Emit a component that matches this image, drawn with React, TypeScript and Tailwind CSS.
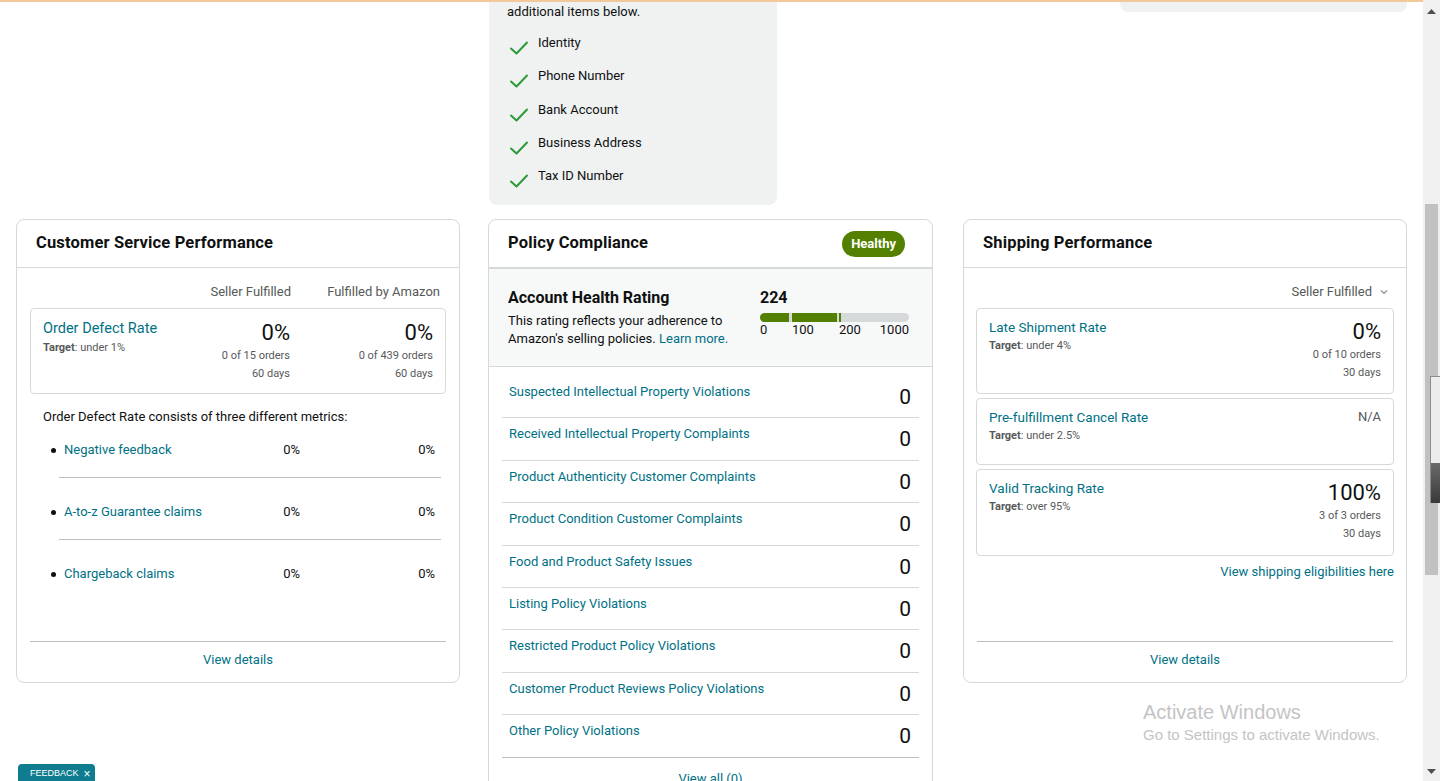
import React from "react";

const F = "font-['Roboto',_'Liberation_Sans',_sans-serif]";

function Check() {
  return (
    <svg width="20" height="16" viewBox="0 0 20 16" className="shrink-0 mt-[5px]">
      <path d="M2 8.5 L7.5 13.5 L18 2.5" fill="none" stroke="#2b9a3a" strokeWidth="2" strokeLinecap="round" strokeLinejoin="round" />
    </svg>
  );
}

function CardHeader({ title, right }: { title: string; right?: React.ReactNode }) {
  return (
    <div className="h-[48px] border-b border-[#d5d9d9] flex items-center justify-between px-[19px] shrink-0">
      <div className="text-[16.5px] font-bold text-[#0f1111] tracking-[0.15px]">{title}</div>
      {right}
    </div>
  );
}

function Footer() {
  return (
    <div className="mt-auto mb-[5px] mx-[13px] border-t border-[#bbbfbf] h-[36px] flex items-center justify-center text-[13px] text-[#007185]">
      View details
    </div>
  );
}

const subMetrics = ["Negative feedback", "A-to-z Guarantee claims", "Chargeback claims"];

function CustomerService() {
  return (
    <div className="w-[444px] h-[464px] border border-[#d5d9d9] rounded-[8px] flex flex-col bg-white shrink-0">
      <CardHeader title="Customer Service Performance" />
      <div className="px-[13px] pt-[16px] flex flex-col">
        <div className="grid grid-cols-[1fr_110px_149px] pr-[6px] text-[13px] text-[#565959] leading-[16px]">
          <div />
          <div className="text-right">Seller Fulfilled</div>
          <div className="text-right">Fulfilled by Amazon</div>
        </div>
        <div className="mt-[8px] border border-[#d5d9d9] rounded-[4px] h-[86px] px-[12px] pt-[10px] grid grid-cols-[1fr_110px_143px]">
          <div>
            <div className="text-[14.5px] text-[#007185] leading-[20px]">Order Defect Rate</div>
            <div className="text-[11px] text-[#565959] leading-[16px] mt-[1px]"><span className="font-bold">Target</span>: under 1%</div>
          </div>
          {[["0 of 15 orders"], ["0 of 439 orders"]].map(([o], i) => (
            <div key={i} className="text-right">
              <div className="text-[22px] text-[#0f1111] leading-[28px]">0%</div>
              <div className="text-[11px] text-[#565959] leading-[18px]">{o}</div>
              <div className="text-[11px] text-[#565959] leading-[18px]">60 days</div>
            </div>
          ))}
        </div>
        <div className="pl-[13px] mt-[14px] text-[13px] text-[#0f1111] leading-[18px]">Order Defect Rate consists of three different metrics:</div>
        <ul className="mt-[14px] pl-[29px] pr-[5px]">
          {subMetrics.map((m, i) => (
            <li key={m} className={`${i === 0 ? "pt-0" : "pt-[24px]"} ${i < 2 ? "border-b border-[#bbbfbf] pb-[17px]" : ""}`}>
              <div className="flex text-[13px] leading-[20px] -ml-[8px] pr-[6px]">
                <div className="flex-1 flex items-center whitespace-nowrap">
                  <span className="w-[5px] h-[5px] rounded-full bg-[#0f1111] mr-[8px]" />
                  <span className="text-[#007185]">{m}</span>
                </div>
                <div className="w-[60px] text-right text-[#0f1111]">0%</div>
                <div className="w-[135px] text-right text-[#0f1111]">0%</div>
              </div>
            </li>
          ))}
        </ul>
      </div>
      <Footer />
    </div>
  );
}

const policies = [
  "Suspected Intellectual Property Violations",
  "Received Intellectual Property Complaints",
  "Product Authenticity Customer Complaints",
  "Product Condition Customer Complaints",
  "Food and Product Safety Issues",
  "Listing Policy Violations",
  "Restricted Product Policy Violations",
  "Customer Product Reviews Policy Violations",
  "Other Policy Violations",
];

function PolicyCompliance() {
  return (
    <div className="w-[445px] border border-[#d5d9d9] rounded-[8px] flex flex-col bg-white shrink-0">
      <CardHeader
        title="Policy Compliance"
        right={
          <span className="mr-[8px] h-[26px] px-[9px] rounded-full bg-[#538000] text-white text-[13px] font-bold flex items-center">Healthy</span>
        }
      />
      <div className="h-[99px] bg-[#f7f8f8] border-t border-b border-[#d5d9d9] flex px-[19px] pt-[19px]">
        <div className="w-[252px]">
          <div className="text-[16px] font-bold text-[#0f1111] leading-[20px]">Account Health Rating</div>
          <div className="text-[13px] text-[#0f1111] leading-[18px] mt-[4px] pr-[10px]">
            This rating reflects your adherence to Amazon's selling policies. <span className="text-[#007185]">Learn more.</span>
          </div>
        </div>
        <div className="w-[149px]">
          <div className="text-[16px] font-bold text-[#0f1111] leading-[20px]">224</div>
          <div className="mt-[5px] h-[9px] rounded-full bg-[#d5d9d9] flex overflow-hidden">
            <div className="w-[29px] bg-[#538000]" />
            <div className="w-[3px]" />
            <div className="w-[45px] bg-[#538000]" />
            <div className="w-[2px]" />
            <div className="w-[2px] bg-[#538000]" />
          </div>
          <div className="relative h-[16px] text-[13px] text-[#0f1111] leading-[16px]">
            <span className="absolute left-0">0</span>
            <span className="absolute left-[32px]">100</span>
            <span className="absolute left-[79px]">200</span>
            <span className="absolute right-0">1000</span>
          </div>
        </div>
      </div>
      <div className="px-[13px] pt-[9px]">
        {policies.map((p, i) => (
          <div key={p} className={`h-[42.4px] flex justify-between items-start px-[7px] border-b ${i === policies.length - 1 ? "border-[#bbbfbf]" : "border-[#d5d9d9]"}`}>
            <div className="text-[13px] text-[#007185] leading-[18px] pt-[7px]">{p}</div>
            <div className="text-[21px] text-[#0f1111] leading-[24px] pt-[9px] pr-[1px]">0</div>
          </div>
        ))}
        <div className="h-[42px] flex items-center justify-center text-[13px] text-[#007185]">View all (0)</div>
      </div>
    </div>
  );
}

function ShipBox({ title, target, value, orders, h }: { title: string; target: string; value: string; orders?: string; h: string }) {
  return (
    <div className={`border border-[#d5d9d9] rounded-[4px] px-[12px] pt-[8px] flex justify-between ${h}`}>
      <div>
        <div className="text-[13.5px] text-[#007185] leading-[20px]">{title}</div>
        <div className="text-[11px] text-[#565959] leading-[16px] mt-[1px]"><span className="font-bold">Target</span>: {target}</div>
      </div>
      <div className="text-right">
        {orders ? (
          <>
            <div className="text-[22px] text-[#0f1111] leading-[28px] mt-[1px]">{value}</div>
            <div className="text-[11px] text-[#565959] leading-[18px]">{orders}</div>
            <div className="text-[11px] text-[#565959] leading-[18px]">30 days</div>
          </>
        ) : (
          <div className="text-[13px] text-[#565959] leading-[20px]">{value}</div>
        )}
      </div>
    </div>
  );
}

function Shipping() {
  return (
    <div className="w-[444px] h-[464px] border border-[#d5d9d9] rounded-[8px] flex flex-col bg-white shrink-0 ml-[2px]">
      <CardHeader title="Shipping Performance" />
      <div className="px-[12px] pt-[16px] flex flex-col">
        <div className="flex justify-end items-center pr-[6px] text-[13px] text-[#565959] leading-[16px]">
          Seller Fulfilled
          <svg width="8" height="6" viewBox="0 0 8 6" className="ml-[8px]">
            <path d="M1 1.5 L4 4.5 L7 1.5" fill="none" stroke="#8d9096" strokeWidth="1.2" />
          </svg>
        </div>
        <div className="mt-[8px] flex flex-col gap-[4px]">
          <ShipBox title="Late Shipment Rate" target="under 4%" value="0%" orders="0 of 10 orders" h="h-[86px]" />
          <ShipBox title="Pre-fulfillment Cancel Rate" target="under 2.5%" value="N/A" h="h-[67px]" />
          <ShipBox title="Valid Tracking Rate" target="over 95%" value="100%" orders="3 of 3 orders" h="h-[87px]" />
        </div>
        <div className="text-right text-[13px] text-[#007185] leading-[20px] mt-[6px]">View shipping eligibilities here</div>
      </div>
      <Footer />
    </div>
  );
}

const checks = ["Identity", "Phone Number", "Bank Account", "Business Address", "Tax ID Number"];

export default function App() {
  return (
    <div className={`w-[1440px] h-[781px] overflow-hidden flex relative bg-white ${F}`}>
      <div className="flex-1 relative">
        <div className="flex gap-[28px] pl-[16px]">
          <div className="w-[444px] shrink-0" />
          <div className="w-[445px] shrink-0">
            <div className="w-[288px] h-[205px] ml-[1px] bg-[#f0f2f2] rounded-b-[8px] px-[18px] pt-[2px]">
              <div className="text-[13px] text-[#0f1111] leading-[20px]">additional items below.</div>
              <div className="mt-[13px] ml-[2px] flex flex-col gap-[13.3px]">
                {checks.map((c) => (
                  <div key={c} className="flex items-start gap-[9px] h-[20px]">
                    <Check />
                    <span className="text-[13px] text-[#0f1111] leading-[18px] -mt-[1px]">{c}</span>
                  </div>
                ))}
              </div>
            </div>
          </div>
          <div className="w-[444px] shrink-0 ml-[2px]">
            <div className="ml-[157px] w-[287px] h-[12px] bg-[#f0f2f2] rounded-b-[8px]" />
          </div>
        </div>
        <div className="flex items-start gap-[28px] pl-[16px] mt-[14px]">
          <CustomerService />
          <PolicyCompliance />
          <Shipping />
        </div>
        <div className="absolute top-0 left-0 right-0 h-[2px] bg-[#f3c99a]" />
        <div className="absolute left-[1143px] top-[700px] text-[#c4c4c4] font-['Liberation_Sans',_sans-serif] pointer-events-none">
          <div className="text-[20px] leading-[24px]">Activate Windows</div>
          <div className="text-[15px] leading-[20px] mt-[1px]">Go to Settings to activate Windows.</div>
        </div>
        <div className="absolute left-[18px] bottom-0 w-[77px] h-[17px] bg-[#0f7c90] rounded-t-[4px] flex items-center pl-[12px] gap-[5px] text-white text-[9px] font-['Liberation_Sans',_sans-serif] pt-[2px]">
          <span>FEEDBACK</span>
          <span className="text-[12px] leading-none">×</span>
        </div>
      </div>
      <div className="w-[17px] bg-[#f0f0f0] relative shrink-0">
        <svg width="9" height="5" viewBox="0 0 9 5" className="absolute left-[4px] top-[9px]"><path d="M0 5 L4.5 0 L9 5 Z" fill="#505050" /></svg>
        <div className="absolute left-[2px] right-[2px] top-[204px] h-[371px] bg-[#c1c1c1]" />
        <svg width="9" height="5" viewBox="0 0 9 5" className="absolute left-[4px] bottom-[7px]"><path d="M0 0 L4.5 5 L9 0 Z" fill="#505050" /></svg>
      </div>
      <div className="absolute right-0 top-[376px] w-[10px] h-[127px] flex flex-col border-l border-t border-[#8a8a8a]">
        <div className="h-[87px] bg-[#ececec]" />
        <div className="h-[40px] bg-gradient-to-b from-[#6a6a6a] to-[#3a3a3a]" />
      </div>
    </div>
  );
}
